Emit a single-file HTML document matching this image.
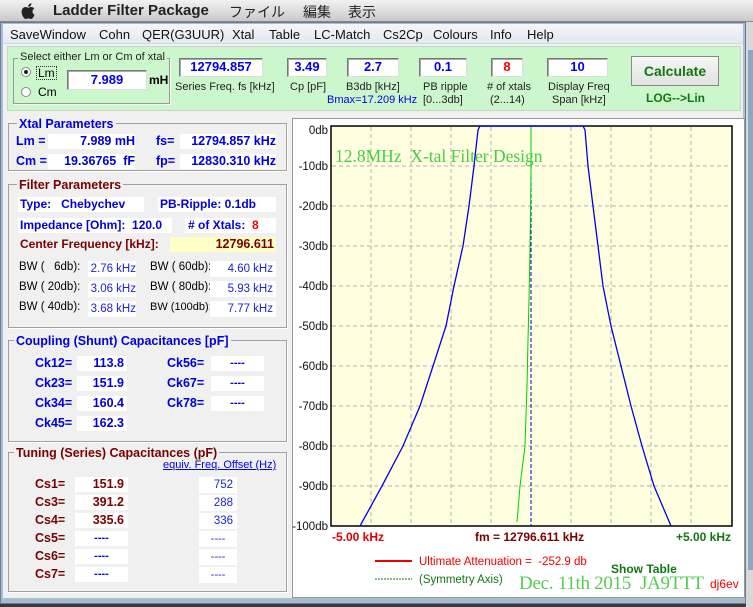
<!DOCTYPE html>
<html><head><meta charset="utf-8"><style>
*{margin:0;padding:0;box-sizing:border-box}
body{width:753px;height:607px;overflow:hidden;background:#3a3a3a;font-family:"Liberation Sans","Noto Sans CJK JP",sans-serif;font-size:12px;position:relative}
.a{position:absolute;white-space:nowrap}
.b{font-weight:bold}
.in{position:absolute;background:#fff;border:1px solid #777;border-right-color:#ddd;border-bottom-color:#ddd;box-shadow:inset 1px 1px 0 #aaa;font-weight:bold;color:#0000ee;text-align:center;font-size:13px;line-height:16px}
.grp{position:absolute;border:1px solid #a0a0a0;box-shadow:1px 1px 0 #fff}
.bl{color:#0000dd}.dr{color:#7a0000}
.v{position:absolute;background:#fff;text-align:right;font-weight:bold;line-height:15px;font-size:12.5px;white-space:nowrap;overflow:hidden}
.w{position:absolute;background:#fff;text-align:right;color:#2020dd;line-height:16px;font-size:11.5px;white-space:nowrap}
.l{position:absolute;white-space:nowrap;font-size:11.5px}
</style></head><body>
<div class="a" style="left:0;top:0;width:753px;height:22px;background:linear-gradient(#f2f2f2,#c9c9c9);border-bottom:1px solid #888"></div>
<svg class="a" style="left:20px;top:2px" width="18" height="18" viewBox="0 0 18 18"><path d="M12.5 9.6c0-2 1.6-2.9 1.7-3-1-1.4-2.4-1.6-2.9-1.6-1.2-.1-2.4.7-3 .7s-1.6-.7-2.6-.7C4.300 5 3 5.800 2.300 7c-1.400 2.400-.4 6 1 8 .7 1 1.500 2 2.500 2 1 0 1.400-.6 2.600-.6s1.500.6 2.600.6c1.100 0 1.800-1 2.400-2 .8-1.100 1.100-2.200 1.100-2.300 0 0-2-.8-2-3.100zM10.600 3.700c.5-.7.9-1.600.8-2.500-.8 0-1.800.5-2.300 1.200-.5.600-1 1.500-.8 2.400.9.1 1.800-.4 2.300-1.100z" fill="#222"/></svg>
<div class="a b" style="left:53px;top:2px;font-size:15px;color:#222">Ladder Filter Package</div>
<div class="a" style="left:229px;top:2px;font-size:14px;color:#222">ファイル</div>
<div class="a" style="left:303px;top:2px;font-size:14px;color:#222">編集</div>
<div class="a" style="left:348px;top:2px;font-size:14px;color:#222">表示</div>
<div class="a" style="left:0;top:22px;width:746px;height:582px;background:#a9bcd2;border:1px solid #6a7d94"></div>
<div class="a" style="left:746px;top:22px;width:7px;height:585px;background:#d8d8d8"></div>
<div class="a" style="left:748px;top:50px;width:5px;height:520px;background:#8fa6c0"></div>
<div class="a" style="left:3px;top:24px;width:740px;height:574px;background:#f0f0f0"></div>
<div class="a" style="left:3px;top:24px;width:740px;height:20px;background:linear-gradient(#f4f6fa,#e4e8ef);border-bottom:1px solid #cdd"></div>
<div class="a" style="left:10px;top:27px;font-size:13px;color:#111">SaveWindow</div>
<div class="a" style="left:99px;top:27px;font-size:13px;color:#111">Cohn</div>
<div class="a" style="left:142px;top:27px;font-size:13px;color:#111">QER(G3UUR)</div>
<div class="a" style="left:232px;top:27px;font-size:13px;color:#111">Xtal</div>
<div class="a" style="left:269px;top:27px;font-size:13px;color:#111">Table</div>
<div class="a" style="left:314px;top:27px;font-size:13px;color:#111">LC-Match</div>
<div class="a" style="left:383px;top:27px;font-size:13px;color:#111">Cs2Cp</div>
<div class="a" style="left:433px;top:27px;font-size:13px;color:#111">Colours</div>
<div class="a" style="left:490px;top:27px;font-size:13px;color:#111">Info</div>
<div class="a" style="left:527px;top:27px;font-size:13px;color:#111">Help</div>
<div class="a" style="left:7px;top:46px;width:734px;height:65px;background:#ccf7cc;border:1px solid #c8d4c8"></div>
<div class="grp" style="left:13px;top:58px;width:157px;height:46px;border-color:#999"></div>
<div class="a" style="left:18px;top:51px;background:#ccf7cc;padding:0 2px;font-size:11px;color:#222">Select either Lm or Cm of xtal</div>
<div class="a" style="left:21px;top:67px;width:10px;height:10px;border-radius:50%;background:#fff;border:1px solid #888"></div>
<div class="a" style="left:24px;top:70px;width:4px;height:4px;border-radius:50%;background:#222"></div>
<div class="a" style="left:36px;top:66px;font-size:12px;border:1px dotted #333;padding:0 1px;line-height:12px">Lm</div>
<div class="a" style="left:21px;top:87px;width:10px;height:10px;border-radius:50%;background:#fff;border:1px solid #888"></div>
<div class="a" style="left:38px;top:85px;font-size:12px">Cm</div>
<div class="in" style="left:67px;top:70px;width:80px;height:20px;line-height:18px">7.989</div>
<div class="a b" style="left:149px;top:73px;font-size:12px">mH</div>
<div class="in" style="left:179px;top:58px;width:84px;height:19px">12794.857</div>
<div class="a" style="left:175px;top:81px;font-size:11px;color:#222">Series Freq. fs [kHz]</div>
<div class="in" style="left:287px;top:58px;width:40px;height:19px">3.49</div>
<div class="a" style="left:290px;top:81px;font-size:11px;color:#222">Cp [pF]</div>
<div class="in" style="left:347px;top:58px;width:52px;height:19px">2.7</div>
<div class="a" style="left:346px;top:81px;font-size:11px;color:#222">B3db [kHz]</div>
<div class="a" style="left:327px;top:94px;font-size:11px;color:#0000ee">Bmax=17.209 kHz</div>
<div class="in" style="left:419px;top:58px;width:48px;height:19px">0.1</div>
<div class="a" style="left:423px;top:81px;font-size:11px;color:#222">PB ripple</div>
<div class="a" style="left:423px;top:94px;font-size:11px;color:#222">[0...3db]</div>
<div class="in" style="left:491px;top:58px;width:32px;height:19px;color:#ee0000">8</div>
<div class="a" style="left:487px;top:81px;font-size:11px;color:#222">#&nbsp;of xtals</div>
<div class="a" style="left:490px;top:94px;font-size:11px;color:#222">(2...14)</div>
<div class="in" style="left:547px;top:58px;width:61px;height:19px">10</div>
<div class="a" style="left:548px;top:81px;font-size:11px;color:#222">Display Freq</div>
<div class="a" style="left:552px;top:94px;font-size:11px;color:#222">Span [kHz]</div>
<div class="a b" style="left:631px;top:56px;width:88px;height:30px;background:linear-gradient(#f6f6f6,#e2e2e2);border:1px solid #888;color:#117711;font-size:14px;text-align:center;line-height:28px">Calculate</div>
<div class="a b" style="left:646px;top:91px;font-size:12px;color:#117711">LOG--&gt;Lin</div>

<div class="grp" style="left:8px;top:123px;width:279px;height:48px"></div>
<div class="a b bl" style="left:17px;top:117px;background:#f0f0f0;padding:0 2px;font-size:12.5px">Xtal Parameters</div>
<div class="a b bl" style="left:16px;top:134px;font-size:12.5px">Lm =</div>
<div class="v bl" style="left:48px;top:134px;width:87px">7.989 mH</div>
<div class="a b bl" style="left:156px;top:134px;font-size:12.5px">fs=</div>
<div class="v bl" style="left:180px;top:134px;width:96px">12794.857 kHz</div>
<div class="a b bl" style="left:16px;top:154px;font-size:12.5px">Cm =</div>
<div class="v bl" style="left:48px;top:154px;width:87px">19.36765&nbsp; fF</div>
<div class="a b bl" style="left:156px;top:154px;font-size:12.5px">fp=</div>
<div class="v bl" style="left:180px;top:154px;width:96px">12830.310 kHz</div>
<div class="grp" style="left:8px;top:184px;width:279px;height:144px"></div>
<div class="a b dr" style="left:17px;top:178px;background:#f0f0f0;padding:0 2px;font-size:12.5px">Filter Parameters</div>
<div class="v bl" style="left:18px;top:197px;width:126px;text-align:left;padding-left:2px;font-size:12px">Type:&nbsp;&nbsp; Chebychev</div>
<div class="v bl" style="left:158px;top:197px;width:118px;text-align:left;padding-left:2px;font-size:12px">PB-Ripple: 0.1db</div>
<div class="v bl" style="left:18px;top:218px;width:154px;text-align:left;padding-left:2px;font-size:12px">Impedance [Ohm]:&nbsp; 120.0</div>
<div class="v bl" style="left:185px;top:218px;width:91px;text-align:left;padding-left:3px;font-size:12px">#&nbsp;of Xtals:&nbsp; <span style="color:#ee0000">8</span></div>
<div class="a b dr" style="left:20px;top:237px;font-size:12px">Center Frequency [kHz]:</div>
<div class="v dr" style="left:170px;top:237px;width:106px;background:#ffffc4;padding-right:2px">12796.611</div>
<div class="l" style="left:19px;top:261px">BW (&nbsp;&nbsp; 6db):</div><div class="w" style="left:88px;top:261px;width:48px">2.76 kHz</div>
<div class="l" style="left:150px;top:261px">BW ( 60db):</div><div class="w" style="left:210px;top:261px;width:66px;padding-right:3px">4.60 kHz</div>
<div class="l" style="left:19px;top:281px">BW ( 20db):</div><div class="w" style="left:88px;top:281px;width:48px">3.06 kHz</div>
<div class="l" style="left:150px;top:281px">BW ( 80db):</div><div class="w" style="left:210px;top:281px;width:66px;padding-right:3px">5.93 kHz</div>
<div class="l" style="left:19px;top:301px">BW ( 40db):</div><div class="w" style="left:88px;top:301px;width:48px">3.68 kHz</div>
<div class="l" style="left:150px;top:301px;font-size:11px">BW (100db):</div><div class="w" style="left:210px;top:301px;width:66px;padding-right:3px">7.77 kHz</div>
<div class="grp" style="left:8px;top:340px;width:279px;height:102px"></div>
<div class="a b bl" style="left:14px;top:334px;background:#f0f0f0;padding:0 2px;font-size:12.5px">Coupling (Shunt) Capacitances [pF]</div>
<div class="a b bl" style="left:35px;top:356px;font-size:12.5px">Ck12=</div><div class="v bl" style="left:77px;top:356px;width:50px;padding-right:3px">113.8</div>
<div class="a b bl" style="left:35px;top:376px;font-size:12.5px">Ck23=</div><div class="v bl" style="left:77px;top:376px;width:50px;padding-right:3px">151.9</div>
<div class="a b bl" style="left:35px;top:396px;font-size:12.5px">Ck34=</div><div class="v bl" style="left:77px;top:396px;width:50px;padding-right:3px">160.4</div>
<div class="a b bl" style="left:35px;top:416px;font-size:12.5px">Ck45=</div><div class="v bl" style="left:77px;top:416px;width:50px;padding-right:3px">162.3</div>
<div class="a b bl" style="left:167px;top:356px;font-size:12.5px">Ck56=</div><div class="v bl" style="left:211px;top:356px;width:53px;text-align:center;font-size:11px">----</div>
<div class="a b bl" style="left:167px;top:376px;font-size:12.5px">Ck67=</div><div class="v bl" style="left:211px;top:376px;width:53px;text-align:center;font-size:11px">----</div>
<div class="a b bl" style="left:167px;top:396px;font-size:12.5px">Ck78=</div><div class="v bl" style="left:211px;top:396px;width:53px;text-align:center;font-size:11px">----</div>
<div class="grp" style="left:8px;top:452px;width:279px;height:140px"></div>
<div class="a b dr" style="left:14px;top:446px;background:#f0f0f0;padding:0 2px;font-size:12.5px">Tuning (Series) Capacitances (pF)</div>
<div class="a" style="left:163px;top:459px;font-size:11px;color:#0000ee;text-decoration:underline">equiv. Freq. Offset (Hz)</div>
<div class="a b dr" style="left:35px;top:477px;font-size:12.5px">Cs1=</div><div class="v dr" style="left:75px;top:477px;width:53px;padding-right:4px">151.9</div><div class="w" style="left:199px;top:477px;width:38px;padding-right:4px">752</div>
<div class="a b dr" style="left:35px;top:495px;font-size:12.5px">Cs3=</div><div class="v dr" style="left:75px;top:495px;width:53px;padding-right:4px">391.2</div><div class="w" style="left:199px;top:495px;width:38px;padding-right:4px">288</div>
<div class="a b dr" style="left:35px;top:513px;font-size:12.5px">Cs4=</div><div class="v dr" style="left:75px;top:513px;width:53px;padding-right:4px">335.6</div><div class="w" style="left:199px;top:513px;width:38px;padding-right:4px">336</div>
<div class="a b dr" style="left:35px;top:531px;font-size:12.5px">Cs5=</div><div class="v bl" style="left:75px;top:531px;width:53px;text-align:center;font-size:11px">----</div><div class="w" style="left:199px;top:531px;width:38px;text-align:center;font-size:11px">----</div>
<div class="a b dr" style="left:35px;top:549px;font-size:12.5px">Cs6=</div><div class="v bl" style="left:75px;top:549px;width:53px;text-align:center;font-size:11px">----</div><div class="w" style="left:199px;top:549px;width:38px;text-align:center;font-size:11px">----</div>
<div class="a b dr" style="left:35px;top:567px;font-size:12.5px">Cs7=</div><div class="v bl" style="left:75px;top:567px;width:53px;text-align:center;font-size:11px">----</div><div class="w" style="left:199px;top:567px;width:38px;text-align:center;font-size:11px">----</div>

<div class="a" style="left:292px;top:118px;width:453px;height:480px;background:#fff;border:1px solid #999"></div>
<svg class="a" style="left:0;top:0" width="753" height="607">
<rect x="331" y="126" width="401" height="400" fill="#ffffe0" stroke="#000" stroke-width="1.5"/>
<g stroke="#b0b0b0" stroke-dasharray="4,3" stroke-width="1">
<line x1="371" y1="127" x2="371" y2="525"/><line x1="411" y1="127" x2="411" y2="525"/><line x1="451" y1="127" x2="451" y2="525"/><line x1="491" y1="127" x2="491" y2="525"/><line x1="571" y1="127" x2="571" y2="525"/><line x1="611" y1="127" x2="611" y2="525"/><line x1="651" y1="127" x2="651" y2="525"/><line x1="691" y1="127" x2="691" y2="525"/>
<line x1="332" y1="166" x2="731" y2="166"/><line x1="332" y1="206" x2="731" y2="206"/><line x1="332" y1="246" x2="731" y2="246"/><line x1="332" y1="286" x2="731" y2="286"/><line x1="332" y1="326" x2="731" y2="326"/><line x1="332" y1="366" x2="731" y2="366"/><line x1="332" y1="406" x2="731" y2="406"/><line x1="332" y1="446" x2="731" y2="446"/><line x1="332" y1="486" x2="731" y2="486"/>
</g>
<g font-family="Liberation Sans, sans-serif" font-size="11.5" fill="#111" text-anchor="end">
<text x="328" y="134">0db</text><text x="328" y="170">-10db</text><text x="328" y="210">-20db</text><text x="328" y="250">-30db</text><text x="328" y="290">-40db</text><text x="328" y="330">-50db</text><text x="328" y="370">-60db</text><text x="328" y="410">-70db</text><text x="328" y="450">-80db</text><text x="328" y="490">-90db</text><text x="328" y="530">-100db</text>
</g>
<line x1="531" y1="170" x2="531" y2="526" stroke="#0000cc" stroke-width="1" stroke-dasharray="4,2"/>
<polyline fill="none" stroke="#00cc00" stroke-width="1" points="531,126 531,170 530,250 529,300 528,340 527,386 525,446 520,486 517,522"/>
<polyline fill="none" stroke="#0000ee" stroke-width="1.3" points="360,526 382,486 403,446 420,406 433,366 446,326 454,286 463,246 469,206 474,166 478,130 480,126 583,126 585,130 588,166 593,206 598,246 603,286 611,326 621,366 631,406 642,446 654,486 671,526"/>
<text x="335" y="162" font-family="Liberation Serif, serif" font-size="17.5" fill="#44cc44">12.8MHz&#160; X-tal Filter Design</text>
<g font-family="Liberation Sans, sans-serif" font-size="12" font-weight="bold">
<text x="332" y="541" fill="#dd0000">-5.00 kHz</text>
<text x="475" y="541" fill="#7a0000">fm = 12796.611 kHz</text>
<text x="731" y="541" fill="#117711" text-anchor="end">+5.00 kHz</text>
<text x="611" y="573" fill="#117711">Show Table</text>
</g>
<line x1="375" y1="561" x2="412" y2="561" stroke="#ee0000" stroke-width="2"/>
<line x1="375" y1="579" x2="412" y2="579" stroke="#117711" stroke-width="1" stroke-dasharray="2,1"/>
<text x="419" y="565" font-family="Liberation Sans, sans-serif" font-size="11.5" fill="#ee0000">Ultimate Attenuation =&#160; -252.9 db</text>
<text x="419" y="583" font-family="Liberation Sans, sans-serif" font-size="11.5" fill="#117711">(Symmetry Axis)</text>
<text x="519" y="589" font-family="Liberation Serif, serif" font-size="19" fill="#55cc55" textLength="185">Dec. 11th 2015&#160; JA9TTT</text>
<text x="710" y="588" font-family="Liberation Sans, sans-serif" font-size="12" fill="#ee0000">dj6ev</text>
</svg>
</body></html>
